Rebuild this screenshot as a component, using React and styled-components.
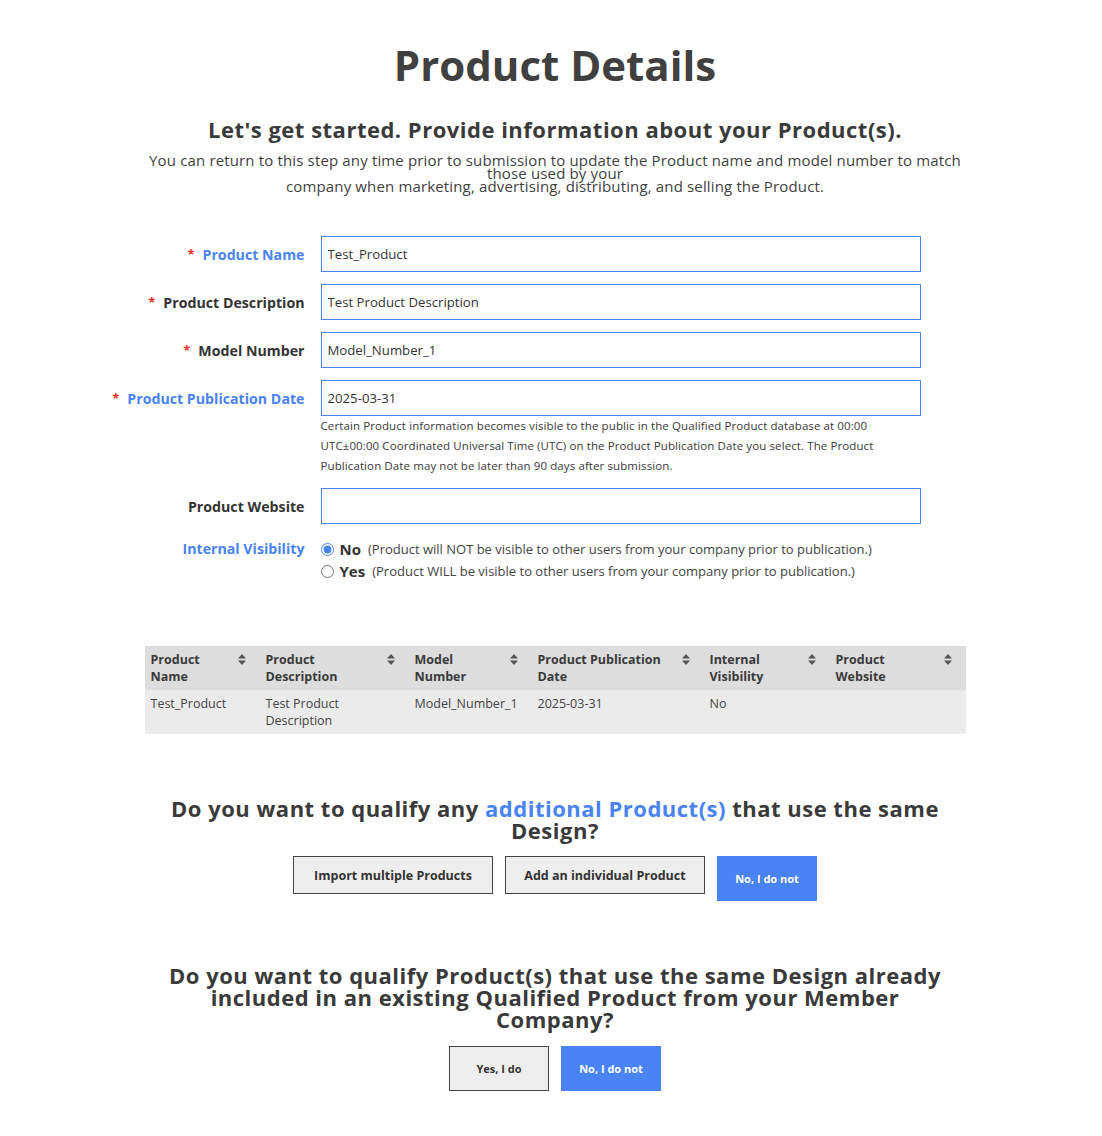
import React from 'react';
import styled, { createGlobalStyle } from 'styled-components';

const GlobalStyle = createGlobalStyle`
  body {
    margin: 0;
    background: #ffffff;
    font-family: 'Open Sans', 'Liberation Sans', sans-serif;
    color: #3f3f3f;
  }
`;

const BLUE = '#4a83f4';

const Page = styled.div`
  display: flex;
  flex-direction: column;
  align-items: center;
  padding: 38px 0 40px 8px;
`;

const Title = styled.h1`
  margin: 0;
  font-size: 42px;
  font-weight: 700;
  line-height: 54px;
  color: #404040;
`;

const Subtitle = styled.h2`
  margin: 23px 0 0;
  font-size: 22px;
  font-weight: 700;
  line-height: 28px;
  letter-spacing: 0.5px;
  color: #3a3a3a;
`;

const Intro = styled.p`
  margin: 11px 0 0;
  width: 830px;
  text-align: center;
  font-size: 15px;
  letter-spacing: 0.15px;
  line-height: 13px;
  color: #3f3f3f;
`;

const Form = styled.div`
  margin-top: 43px;
  width: 821px;
  display: grid;
  grid-template-columns: 160px 600px;
  column-gap: 16px;
  row-gap: 12px;
  align-items: start;
`;

const Label = styled.div`
  display: flex;
  justify-content: flex-end;
  align-items: center;
  height: ${(p) => (p.$short ? '24px' : '36px')};
  white-space: nowrap;
  font-size: 14.2px;
  font-weight: 700;
  color: ${(p) => (p.$blue ? BLUE : '#333333')};
`;

const Star = styled.span`
  color: #e0301e;
  margin-right: 8px;
  font-size: 13px;
`;

const Field = styled.div`
  display: flex;
  flex-direction: column;
`;

const Input = styled.input`
  box-sizing: border-box;
  width: 600px;
  height: 36px;
  border: 1px solid ${BLUE};
  border-radius: 0;
  padding: 0 6px;
  font-family: inherit;
  font-size: 13.2px;
  color: #333333;
  outline: none;
`;

const Help = styled.div`
  font-size: 11.5px;
  letter-spacing: 0.1px;
  line-height: 20px;
  color: #3a3a3a;
  width: 570px;
`;

const Radios = styled.div`
  display: flex;
  flex-direction: column;
  padding-top: 2px;
`;

const RadioRow = styled.label`
  display: flex;
  align-items: center;
  height: 22px;
  white-space: nowrap;
`;

const Radio = styled.input`
  margin: 0 6px 0 0;
  width: 13px;
  height: 13px;
  accent-color: ${BLUE};
`;

const RadioValue = styled.span`
  font-size: 15px;
  font-weight: 700;
  color: #333333;
  margin-right: 7px;
`;

const RadioNote = styled.span`
  font-size: 13px;
  color: #444444;
`;

const Table = styled.table`
  margin-top: 64px;
  width: 821px;
  border-collapse: collapse;
  table-layout: fixed;
  font-size: 12.5px;
  line-height: 17px;
`;

const Th = styled.th`
  background: #dddddd;
  padding: 5px 14px 5px 6px;
  text-align: left;
  vertical-align: top;
  font-weight: 700;
  color: #3a3a3a;
`;

const ThInner = styled.div`
  display: flex;
  justify-content: space-between;
  align-items: flex-start;
`;

const Td = styled.td`
  background: #ebebeb;
  padding: 5px 6px;
  vertical-align: top;
  color: #444444;
`;

const SortIcon = styled.svg`
  flex: none;
  margin-top: 3px;
  width: 8px;
  height: 11px;
`;

const Question = styled.h3`
  margin: 64px 0 0;
  max-width: 790px;
  text-align: center;
  font-size: 22px;
  font-weight: 700;
  line-height: 21.7px;
  letter-spacing: 0.5px;
  color: #3a3a3a;
`;

const Accent = styled.span`
  color: ${BLUE};
`;

const Buttons = styled.div`
  display: flex;
  align-items: flex-start;
  gap: 12px;
  margin-top: 15px;
`;

const Button = styled.button`
  box-sizing: border-box;
  width: ${(p) => p.$w};
  height: ${(p) => p.$h};
  font-family: inherit;
  font-weight: 700;
  font-size: ${(p) => p.$size || '11px'};
  cursor: pointer;
  border-radius: 0;
  background: ${(p) => (p.$primary ? BLUE : '#eeeeee')};
  color: ${(p) => (p.$primary ? '#ffffff' : '#333333')};
  border: ${(p) => (p.$primary ? 'none' : '1px solid #444444')};
`;

function Sort() {
  return (
    <SortIcon viewBox="0 0 8 11">
      <path d="M4 0 L8 4.5 H0 Z" fill="#555" />
      <path d="M4 11 L8 6.5 H0 Z" fill="#555" />
    </SortIcon>
  );
}

const columns = [
  { title: ['Product', 'Name'], width: 115 },
  { title: ['Product', 'Description'], width: 149 },
  { title: ['Model', 'Number'], width: 123 },
  { title: ['Product Publication', 'Date'], width: 172 },
  { title: ['Internal', 'Visibility'], width: 126 },
  { title: ['Product', 'Website'], width: 136 },
];

const row = ['Test_Product', 'Test Product Description', 'Model_Number_1', '2025-03-31', 'No', ''];

export default function App() {
  return (
    <>
      <GlobalStyle />
      <Page>
        <Title>Product Details</Title>
        <Subtitle>Let's get started. Provide information about your Product(s).</Subtitle>
        <Intro>
          You can return to this step any time prior to submission to update the Product name and model number to match those used by your
          <br />
          company when marketing, advertising, distributing, and selling the Product.
        </Intro>

        <Form>
          <Label $blue><Star>*</Star>Product Name</Label>
          <Input defaultValue="Test_Product" />

          <Label><Star>*</Star>Product Description</Label>
          <Input defaultValue="Test Product Description" />

          <Label><Star>*</Star>Model Number</Label>
          <Input defaultValue="Model_Number_1" />

          <Label $blue><Star>*</Star>Product Publication Date</Label>
          <Field>
            <Input defaultValue="2025-03-31" />
            <Help>
              Certain Product information becomes visible to the public in the Qualified Product database at 00:00
              UTC±00:00 Coordinated Universal Time (UTC) on the Product Publication Date you select. The Product
              Publication Date may not be later than 90 days after submission.
            </Help>
          </Field>

          <Label>Product Website</Label>
          <Input defaultValue="" />

          <Label $blue $short>Internal Visibility</Label>
          <Radios>
            <RadioRow>
              <Radio type="radio" name="visibility" defaultChecked />
              <RadioValue>No</RadioValue>
              <RadioNote>(Product will NOT be visible to other users from your company prior to publication.)</RadioNote>
            </RadioRow>
            <RadioRow>
              <Radio type="radio" name="visibility" />
              <RadioValue>Yes</RadioValue>
              <RadioNote>(Product WILL be visible to other users from your company prior to publication.)</RadioNote>
            </RadioRow>
          </Radios>
        </Form>

        <Table>
          <colgroup>
            {columns.map((c, i) => (
              <col key={i} style={{ width: c.width }} />
            ))}
          </colgroup>
          <thead>
            <tr>
              {columns.map((c, i) => (
                <Th key={i}>
                  <ThInner>
                    <span>
                      {c.title[0]}
                      <br />
                      {c.title[1]}
                    </span>
                    <Sort />
                  </ThInner>
                </Th>
              ))}
            </tr>
          </thead>
          <tbody>
            <tr>
              {row.map((v, i) => (
                <Td key={i}>{v}</Td>
              ))}
            </tr>
          </tbody>
        </Table>

        <Question>
          Do you want to qualify any <Accent>additional Product(s)</Accent> that use the same Design?
        </Question>
        <Buttons>
          <Button $w="200px" $h="38px" $size="12.5px">Import multiple Products</Button>
          <Button $w="200px" $h="38px" $size="12.5px">Add an individual Product</Button>
          <Button $primary $w="100px" $h="45px">No, I do not</Button>
        </Buttons>

        <Question>
          Do you want to qualify Product(s) that use the same Design already included in an existing Qualified Product from your Member Company?
        </Question>
        <Buttons>
          <Button $w="100px" $h="45px">Yes, I do</Button>
          <Button $primary $w="100px" $h="45px">No, I do not</Button>
        </Buttons>
      </Page>
    </>
  );
}
